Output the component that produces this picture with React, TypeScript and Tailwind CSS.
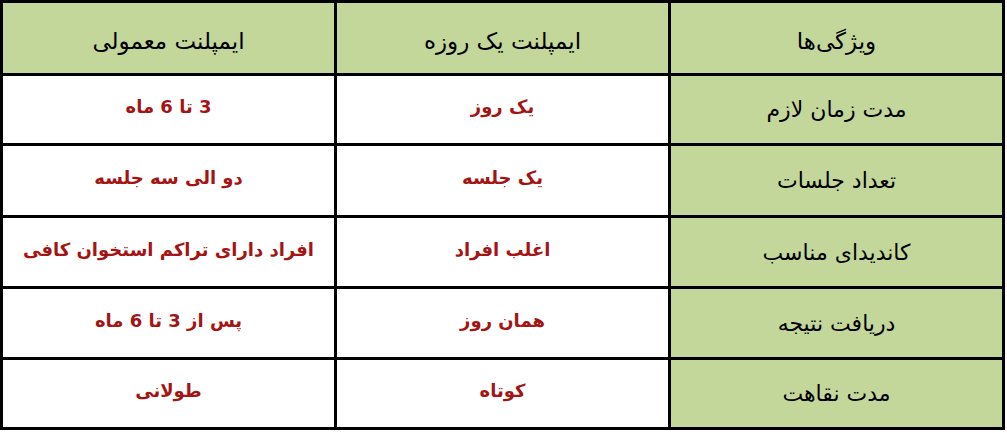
import React from "react";

const rows: [string, string, string][] = [
  ["مدت زمان لازم", "یک روز", "3 تا 6 ماه"],
  ["تعداد جلسات", "یک جلسه", "دو الی سه جلسه"],
  ["کاندیدای مناسب", "اغلب افراد", "افراد دارای تراکم استخوان کافی"],
  ["دریافت نتیجه", "همان روز", "پس از 3 تا 6 ماه"],
  ["مدت نقاهت", "کوتاه", "طولانی"],
];

export default function App() {
  const font = { fontFamily: '"DejaVu Sans", "Noto Sans", sans-serif' };
  return (
    <div className="w-[1007px] h-[433px] bg-white" style={font}>
      <div
        dir="rtl"
        className="w-[1005px] h-[430px] bg-black p-[3px] grid grid-cols-3 gap-[3px] grid-rows-[70px_67px_69px_68px_68px_67px]"
      >
        <div className="bg-[#c4d79b] flex items-center justify-center text-[23px] text-black pt-[6px]">ویژگی‌ها</div>
        <div className="bg-[#c4d79b] flex items-center justify-center text-[23px] text-black pt-[6px]">ایمپلنت یک روزه</div>
        <div className="bg-[#c4d79b] flex items-center justify-center text-[23px] text-black pt-[6px]">ایمپلنت معمولی</div>
        {rows.map((r, i) => (
          <React.Fragment key={i}>
            <div className="bg-[#c4d79b] flex items-center justify-center text-[22px] text-black">{r[0]}</div>
            <div className="bg-white flex items-center justify-center text-[18px] font-bold text-[#a31515] pb-[6px]">{r[1]}</div>
            <div className="bg-white flex items-center justify-center text-[18px] font-bold text-[#a31515] pb-[6px]">{r[2]}</div>
          </React.Fragment>
        ))}
      </div>
    </div>
  );
}
